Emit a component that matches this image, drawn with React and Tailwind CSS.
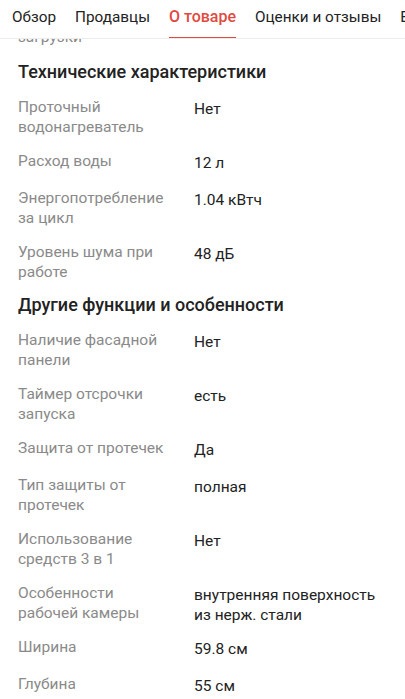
import React from "react";

const tabs = ["Обзор", "Продавцы", "О товаре", "Оценки и отзывы", "Вопросы"];

const sec1 = [
  ["Проточный водонагреватель", "Нет"],
  ["Расход воды", "12 л"],
  ["Энергопотребление за цикл", "1.04 кВтч"],
  ["Уровень шума при работе", "48 дБ"],
];

const sec2 = [
  ["Наличие фасадной панели", "Нет"],
  ["Таймер отсрочки запуска", "есть"],
  ["Защита от протечек", "Да"],
  ["Тип защиты от протечек", "полная"],
  ["Использование средств 3 в 1", "Нет"],
  ["Особенности рабочей камеры", "внутренняя поверхность из нерж. стали"],
  ["Ширина", "59.8 см"],
  ["Глубина", "55 см"],
];

function Row({ label, value }) {
  return (
    <div className="flex min-h-[37px] py-[7px]">
      <div className="w-[176px] shrink-0 pr-[26px] text-[15.5px] leading-5 text-[#8a8a8a]">{label}</div>
      <div className="-mb-[3px] flex-1 pt-[2px] text-[15.5px] leading-[20px] text-[#222]">{value}</div>
    </div>
  );
}

export default function App() {
  return (
    <div className="h-[699px] w-[405px] overflow-hidden bg-white" style={{ fontFamily: "Roboto, 'Noto Sans', sans-serif" }}>
      <div className="flex h-[39px] items-start gap-[19px] overflow-hidden whitespace-nowrap border-b border-[#ececec] pl-[12px]">
        {tabs.map((t) => (
          <div key={t} className={"relative h-[39px] pt-[6px] leading-[22px] " + (t === "О товаре" ? "text-[16px] font-medium text-[#df4a40]" : "text-[15.3px] text-[#222]")}>
            {t}
            {t === "О товаре" && <div className="absolute bottom-0 left-0 right-0 h-[2px] bg-[#df4a40]" />}
          </div>
        ))}
      </div>
      <div className="h-[7px] overflow-hidden pl-[18px]">
        <div className="-mt-[12px] text-[15.5px] leading-5 text-[#8a8a8a]">загрузки</div>
      </div>
      <div className="px-[18px]">
        <div className="pt-[14px] pb-[6px] text-[18px] font-medium leading-6 text-[#222]">Технические характеристики</div>
        {sec1.map(([l, v]) => <Row key={l} label={l} value={v} />)}
        <div className="pt-[4px] pb-[6px] text-[18px] font-medium leading-6 text-[#222]">Другие функции и особенности</div>
        {sec2.map(([l, v]) => <Row key={l} label={l} value={v} />)}
      </div>
    </div>
  );
}
